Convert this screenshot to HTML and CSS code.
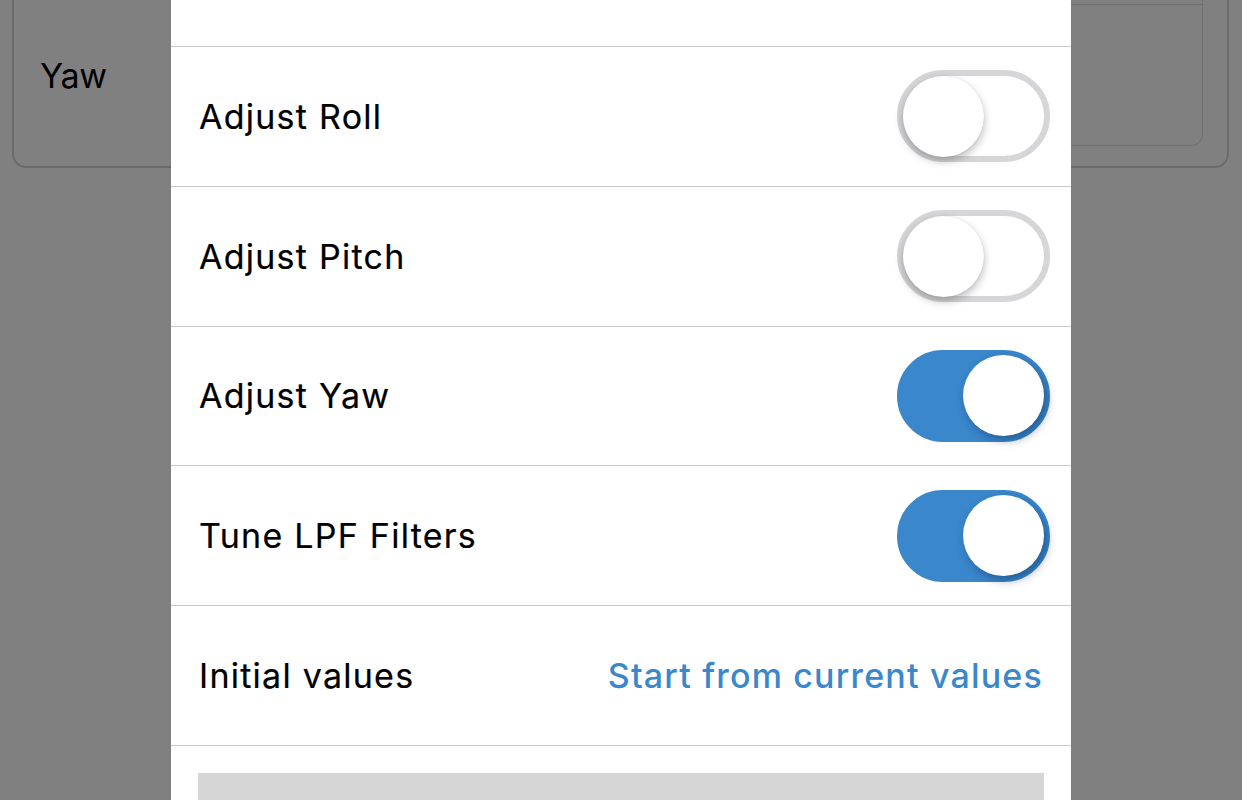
FILE: index.html
```html
<!DOCTYPE html>
<html lang="en">
<head>
<meta charset="utf-8">
<title>Autotune</title>
<link rel="stylesheet" href="styles.css">
</head>
<body>
<div class="backdrop">
  <div class="card">
    <div class="prev-box"></div>
    <div class="field-row">
      <span class="field-label">Yaw</span>
      <div class="field-box"></div>
    </div>
  </div>
</div>

<div class="sheet">
  <div class="sheet-top"></div>
  <div class="row">
    <span class="row-label">Adjust Roll</span>
    <span class="toggle"><span class="knob"></span></span>
  </div>
  <div class="row">
    <span class="row-label">Adjust Pitch</span>
    <span class="toggle"><span class="knob"></span></span>
  </div>
  <div class="row">
    <span class="row-label">Adjust Yaw</span>
    <span class="toggle on"><span class="knob"></span></span>
  </div>
  <div class="row">
    <span class="row-label">Tune LPF Filters</span>
    <span class="toggle on"><span class="knob"></span></span>
  </div>
  <div class="row row-link">
    <span class="row-label">Initial values</span>
    <span class="link">Start from current values</span>
  </div>
  <div class="action-area">
    <div class="action-button"></div>
  </div>
</div>
</body>
</html>
```

FILE: styles.css
```css
* { box-sizing: border-box; }

html, body {
  margin: 0;
  height: 100%;
}

body {
  background: #808080;
  font-family: Inter, "Noto Sans", sans-serif;
  color: #000;
  overflow: hidden;
  position: relative;
}

.backdrop {
  padding: 0 13px 0 12px;
}

.card {
  height: 168px;
  border: 2px solid #6b6b6b;
  border-top: none;
  border-radius: 0 0 14px 14px;
  padding: 0 24px 0 26px;
  display: flex;
  flex-direction: column;
}

.prev-box {
  height: 4px;
  border-right: 1px solid #707070;
}

.field-row {
  display: flex;
  align-items: center;
}

.field-label {
  width: 150px;
  font-size: 34px;
  letter-spacing: -0.2px;
  color: #000;
}

.field-box {
  flex: 1;
  height: 142px;
  border: 1px solid #707070;
  border-radius: 0 0 12px 0;
  border-left: none;
}

.sheet {
  position: absolute;
  top: 0;
  left: 171px;
  width: 900px;
  height: 800px;
  background: #fff;
  display: flex;
  flex-direction: column;
  overflow: hidden;
}

.sheet-top {
  height: 47px;
  border-bottom: 1px solid #c8c8c8;
  flex: none;
}

.row {
  flex: none;
  height: 139.8px;
  border-bottom: 1px solid #c8c8c8;
  display: flex;
  align-items: center;
  justify-content: space-between;
  padding: 0 21px 0 28px;
}

.row-label {
  font-size: 34px;
  letter-spacing: 1.25px;
  -webkit-text-stroke: 0.2px #000;
}

.row-link {
  padding-right: 28px;
}

.link {
  color: #3a87cc;
  font-size: 34px;
  font-weight: 500;
  letter-spacing: 1.18px;
}

.toggle {
  width: 153px;
  height: 92px;
  border-radius: 46px;
  border: 6px solid #d6d6d9;
  background: #fff;
  display: flex;
  align-items: center;
  padding: 0;
}

.knob {
  width: 81px;
  height: 81px;
  border-radius: 50%;
  background: #fff;
  box-shadow: 0 4px 9px rgba(0, 0, 0, 0.28), 0 0 1px rgba(0, 0, 0, 0.15);
}

.toggle.on {
  background: #3a87cc;
  border-color: #3a87cc;
  justify-content: flex-end;
}

.toggle.on .knob {
  box-shadow: 3px 4px 10px rgba(10, 40, 80, 0.45);
}

.action-area {
  padding: 27px 27px 0;
}

.action-button {
  height: 100px;
  background: #d6d6d6;
}
```
